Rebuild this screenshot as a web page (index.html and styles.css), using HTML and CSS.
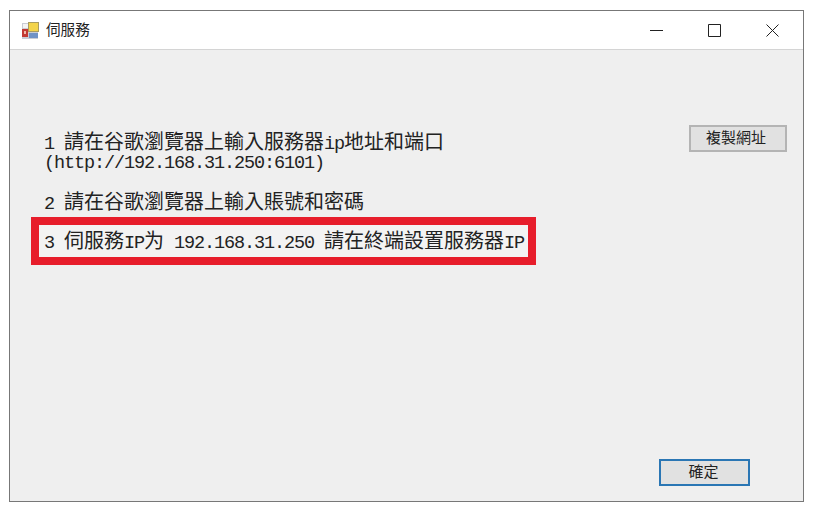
FILE: index.html
```html
<!DOCTYPE html>
<html lang="zh-Hant">
<head>
    <meta charset="UTF-8">
    <title>伺服務</title>
    <link rel="stylesheet" href="styles.css">
</head>
<body>
    <div class="window">
        <div class="titlebar">
            <svg class="app-icon" width="17" height="17" viewBox="0 0 17 17">
                <rect x="0" y="1" width="16" height="16" fill="#c9ccd4"/>
                <rect x="1" y="2" width="5" height="4" fill="#f4f4f4"/>
                <rect x="6" y="0" width="11" height="10" fill="#a89c60"/>
                <rect x="7" y="1" width="9" height="8" fill="#f3d44a"/>
                <rect x="0" y="7" width="6" height="8" fill="#c23a34"/>
                <rect x="2" y="9" width="2" height="3" fill="#eeb8a8"/>
                <rect x="7" y="11" width="9" height="5" fill="#6f92c6"/>
            </svg>
            <span class="title">伺服務</span>
            <div class="caption-buttons">
                <svg width="13" height="13" viewBox="0 0 13 13"><path d="M0 6.5H13" stroke="#222" fill="none"/></svg>
                <svg width="13" height="13" viewBox="0 0 13 13"><path d="M.5 .5H12.5V12.5H.5Z" stroke="#222" fill="none"/></svg>
                <svg width="13" height="13" viewBox="0 0 13 13"><path d="M.5 .5L12.5 12.5M12.5 .5L.5 12.5" stroke="#222" fill="none"/></svg>
            </div>
        </div>
        <div class="content">
            <div class="top-row">
                <div class="steps">
                    <p class="step"><span class="lat">1 </span>請在谷歌瀏覽器上輸入服務器<span class="lat">ip</span>地址和端口<br><span class="lat url">(http://192.168.31.250:6101)</span></p>
                    <p class="step"><span class="lat">2 </span>請在谷歌瀏覽器上輸入賬號和密碼</p>
                    <p class="step highlight"><span class="lat">3 </span>伺服務<span class="lat">IP</span>为<span class="lat"> 192.168.31.250 </span>請在終端設置服務器<span class="lat">IP</span></p>
                </div>
                <button class="btn copy-btn">複製網址</button>
            </div>
            <div class="footer">
                <button class="btn ok-btn">確定</button>
            </div>
        </div>
    </div>
</body>
</html>
```

FILE: styles.css
```css
html, body {
    margin: 0;
    background-color: #fff;
}
body {
    padding: 10px 0 0 9px;
    font-family: "Noto Sans CJK TC", "Liberation Sans", sans-serif;
    color: #222;
}
.window {
    width: 795px;
    height: 492px;
    box-sizing: border-box;
    border: 1px solid #777;
    display: flex;
    flex-direction: column;
    background-color: #efefef;
}
.titlebar {
    height: 39px;
    box-sizing: border-box;
    flex: none;
    display: flex;
    align-items: center;
    padding-left: 12px;
    background-color: #fff;
    border-bottom: 1px solid #d4d4d4;
}
.app-icon {
    margin-right: 7px;
}
.title {
    font-size: 14.6px;
    line-height: 20px;
    margin-top: -2px;
}
.caption-buttons {
    margin-left: auto;
    margin-right: 24px;
    display: flex;
    gap: 45px;
}
.content {
    flex: 1;
    display: flex;
    flex-direction: column;
    justify-content: space-between;
    padding: 75px 16px 15px 21px;
}
.top-row {
    display: flex;
    justify-content: space-between;
    align-items: flex-start;
}
.steps {
    padding-top: 6px;
}
.step {
    margin: 0 0 20px 13px;
    font-size: 20px;
    line-height: 20px;
    white-space: pre;
}
.step .lat {
    font-family: "Liberation Mono", monospace;
    font-size: 18.5px;
    letter-spacing: -1.1px;
    line-height: 0;
}
.step .url {
    vertical-align: 1px;
}
.step.highlight {
    margin: -14px 0 0;
    padding: 5px 0 7px 5px;
    width: 484px;
    border: 8px solid #e71d2b;
    background-color: #f3f3f3;
}
.btn {
    font-family: inherit;
    font-size: 15px;
    line-height: 20px;
    color: #222;
    background-color: #e1e1e1;
    box-sizing: border-box;
}
.copy-btn {
    width: 98px;
    height: 27px;
    padding: 0 4px 4px 0;
    border: 2px solid #b4b4b4;
}
.footer {
    display: flex;
    justify-content: flex-end;
    padding-right: 37px;
}
.ok-btn {
    width: 91px;
    height: 27px;
    padding: 0 2px 6px 0;
    border: 2px solid #2a76b4;
}
```
